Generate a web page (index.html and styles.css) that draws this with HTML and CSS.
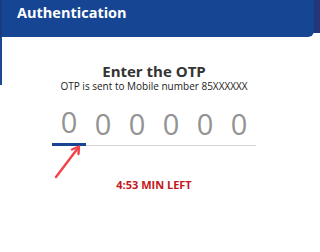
FILE: index.html
```html
<!DOCTYPE html>
<html lang="en">
<head>
<meta charset="utf-8">
<title>Authentication</title>
<link rel="stylesheet" href="styles.css">
</head>
<body>
<div class="topbar">
  <div class="edge-left"></div>
  <div class="header"><h1 class="title">Authentication</h1></div>
  <div class="edge-right"></div>
</div>
<main class="content">
  <h2 class="heading">Enter the OTP</h2>
  <p class="sub">OTP is sent to Mobile number 85XXXXXX</p>
  <div class="otp">
    <span class="cell active">0</span>
    <span class="cell">0</span>
    <span class="cell">0</span>
    <span class="cell">0</span>
    <span class="cell">0</span>
    <span class="cell">0</span>
  </div>
  <p class="timer">4:53 MIN LEFT</p>
  <svg class="pointer" width="40" height="40" viewBox="0 0 40 40" aria-hidden="true">
    <line x1="5" y1="36" x2="27" y2="7" stroke="#f2424a" stroke-width="2.4" stroke-linecap="round"/>
    <polyline points="21,8.5 28,5.5 27.5,13" fill="none" stroke="#f2424a" stroke-width="2.4" stroke-linecap="round" stroke-linejoin="round"/>
  </svg>
</main>
</body>
</html>
```
FILE: styles.css
```css
html, body {
  margin: 0;
  padding: 0;
  background: #ffffff;
  font-family: "Open Sans", "Noto Sans", sans-serif;
}
.topbar {
  display: flex;
  height: 37px;
  background: linear-gradient(to bottom, #24367a 0, #24367a 33px, transparent 33px);
}
.edge-left {
  width: 2px;
  background: #1a3a7c;
}
.header {
  flex: 1;
  background: #164693;
  border-bottom-right-radius: 6px;
  padding: 3px 0 0 15px;
}
.edge-right {
  width: 6px;
}
.title {
  margin: 0;
  color: #ffffff;
  font-size: 14.5px;
  font-weight: 700;
  line-height: 20px;
}
.content {
  position: relative;
  padding: 26px 14px 0 2px;
  background: linear-gradient(#1a4894, #1a4894) no-repeat 0 0 / 2px 48px;
  display: flex;
  flex-direction: column;
  align-items: center;
}
.heading {
  margin: 0 0 1px;
  font-size: 15px;
  line-height: 16px;
  font-weight: 700;
  color: #333333;
}
.sub {
  margin: 0;
  font-size: 10px;
  line-height: 12px;
  color: #222222;
}
.otp {
  display: flex;
  align-items: flex-end;
  margin-top: 13px;
}
.cell {
  width: 34px;
  text-align: center;
  font-size: 29px;
  line-height: 34px;
  padding-bottom: 4px;
  color: #939393;
  border-bottom: 1px solid #d4d4d4;
}
.cell.active {
  border-bottom: 3px solid #164693;
}
.timer {
  margin: 32px 0 0;
  font-size: 11px;
  line-height: 14px;
  font-weight: 700;
  color: #c4161c;
}
.pointer {
  position: absolute;
  left: 51px;
  top: 104px;
}
```
